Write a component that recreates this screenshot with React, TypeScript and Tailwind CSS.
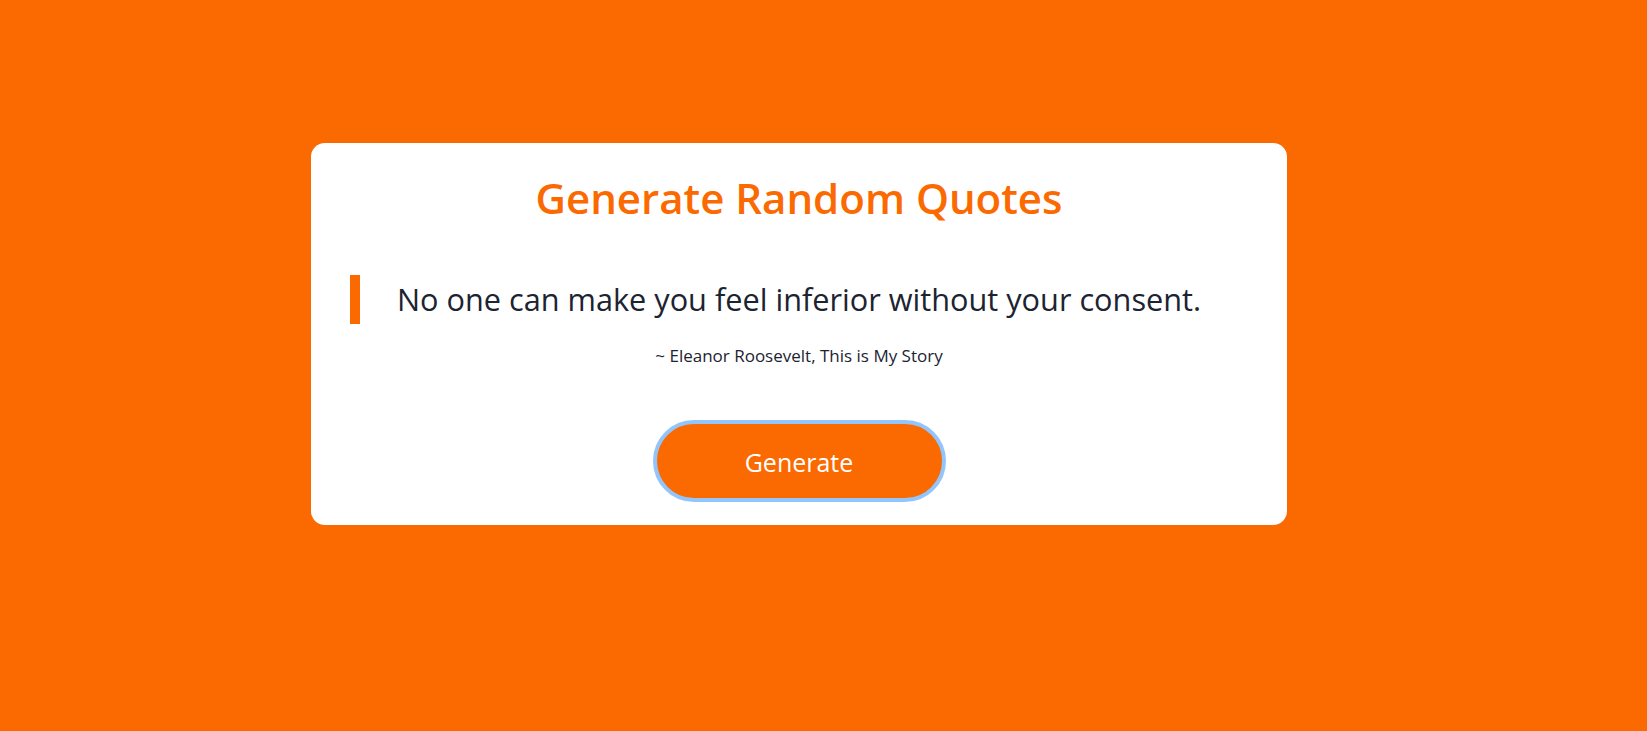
export default function App() {
  return (
    <div className="min-h-screen bg-[#fb6a00] pt-[143px] pl-[311px]" style={{ fontFamily: '"Open Sans", "Noto Sans", sans-serif' }}>
      <div className="w-[976px] h-[382px] bg-white rounded-[14px] flex flex-col items-center pt-[26px] px-[39px]">
        <h1 className="text-[42px] leading-[58px] font-semibold text-[#fb6a00]">Generate Random Quotes</h1>

        <blockquote className="w-full mt-[48px] border-l-[10px] border-[#fb6a00] h-[49px] pr-[10px] flex items-center justify-center">
          <p className="text-[30.7px] text-[#1c2331]">No one can make you feel inferior without your consent.</p>
        </blockquote>

        <p className="mt-[19px] text-[17px] text-[#1c2331]">~ Eleanor Roosevelt, This is My Story</p>

        <button className="mt-[51px] w-[293px] h-[82px] pt-[4px] rounded-full bg-[#fb6a00] border-[4px] border-[#93c5fd] text-white text-[25px]">
          Generate
        </button>
      </div>
    </div>
  )
}
